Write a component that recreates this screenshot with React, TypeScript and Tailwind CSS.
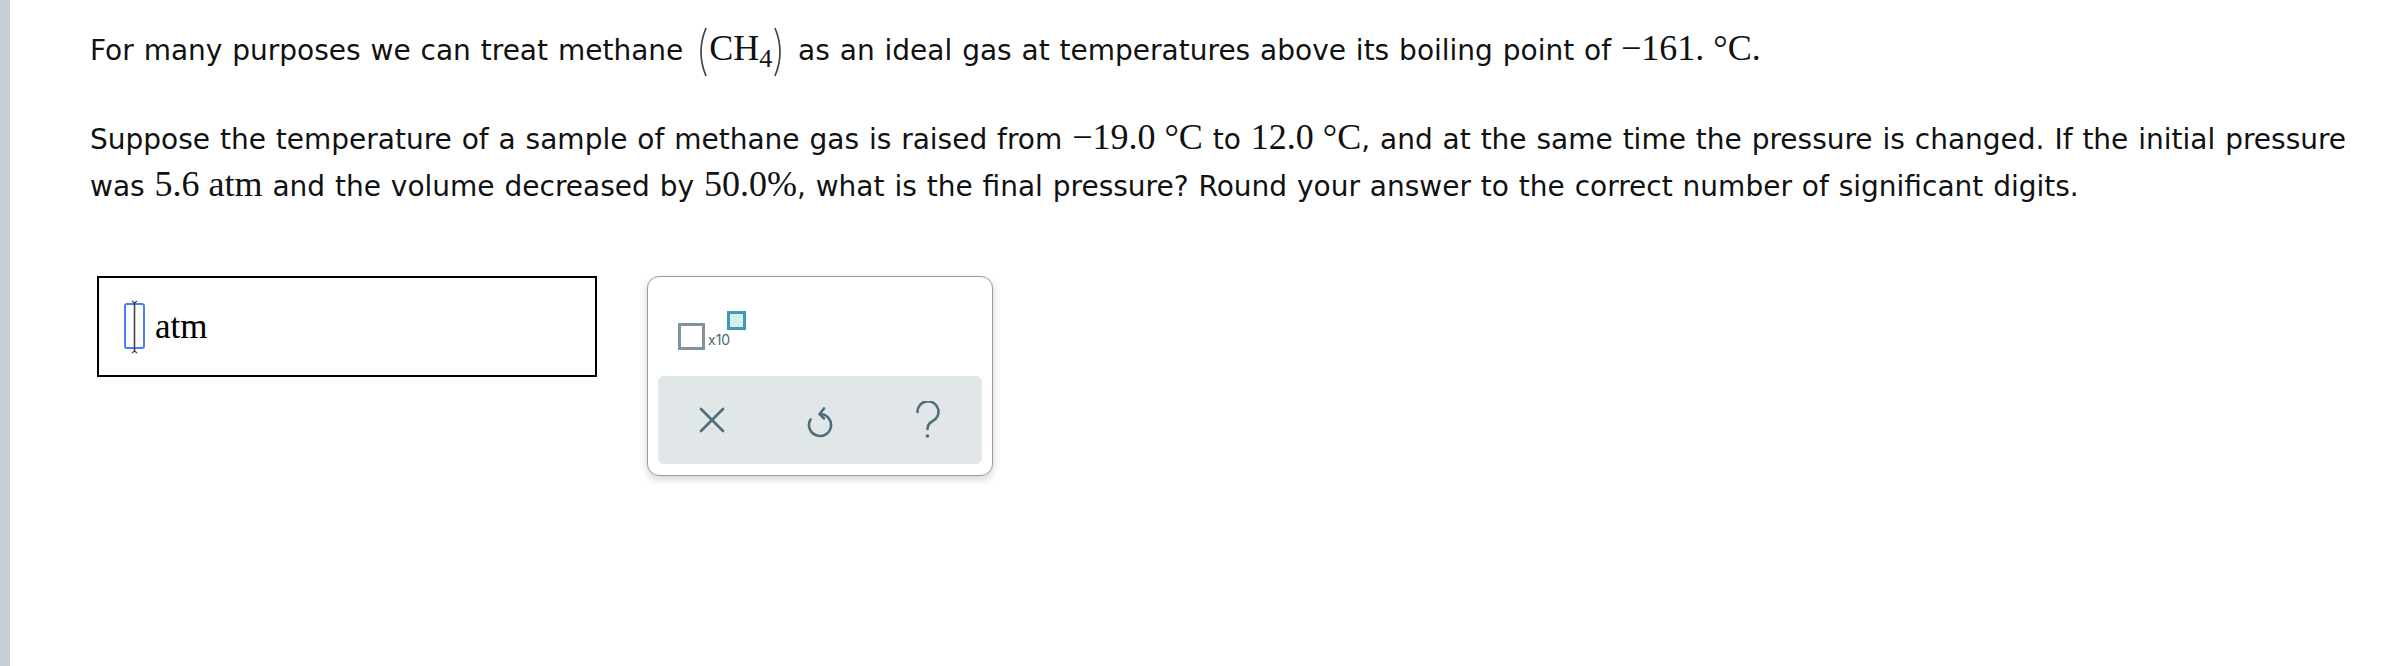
import React from "react";

const sans = { fontFamily: '"DejaVu Sans", Verdana, sans-serif' };

function M({ children }: { children: React.ReactNode }) {
  return (
    <span className="text-[36px] leading-none [font-family:'Liberation_Serif',serif] [word-spacing:0px]">{children}</span>
  );
}

function Paren({ right }: { right?: boolean }) {
  return (
    <svg
      width="16"
      height="52"
      viewBox="0 0 16 52"
      className="inline-block align-middle my-[-14px]"
    >
      <path
        d={right ? "M3 2 Q13 26 3 50" : "M13 2 Q3 26 13 50"}
        fill="none"
        stroke="#444"
        strokeWidth="1.7"
      />
    </svg>
  );
}

export default function App() {
  return (
    <div className="flex min-h-[666px] w-[2408px] bg-white text-[#111]">
      <div className="w-[10px] shrink-0 bg-[#c5cfd5]" />
      <div className="pl-[80px] pt-[27px] flex-1">
        <div className="text-[28px] leading-[47px] whitespace-nowrap [word-spacing:1px]" style={sans}>
          For many purposes we can treat methane{" "}
          <Paren />
          <M>
            CH<sub className="text-[26px] relative top-[7px] align-baseline">4</sub>
          </M>
          <Paren right /> as an ideal gas at temperatures above its boiling point of{" "}
          <M>−161. °C.</M>
        </div>
        <div className="mt-[42px] text-[28px] leading-[47px] whitespace-nowrap [word-spacing:1px]" style={sans}>
          <div>
            Suppose the temperature of a sample of methane gas is raised from <M>−19.0 °C</M> to{" "}
            <M>12.0 °C</M>, and at the same time the pressure is changed. If the initial pressure
          </div>
          <div>
            was <M>5.6 atm</M> and the volume decreased by <M>50.0%</M>, what is the final pressure?
            Round your answer to the correct number of significant digits.
          </div>
        </div>

        <div className="mt-[66px] ml-[7px] flex items-start gap-[50px]">
          <div className="w-[500px] h-[101px] border-2 border-black flex items-center pl-[23px]">
            <svg width="24" height="54" viewBox="0 0 24 54">
              <rect x="3" y="4" width="19" height="44" rx="2" fill="none" stroke="#4d7cf8" strokeWidth="2" />
              <path d="M12.5 2 V52" stroke="#444" strokeWidth="1.6" />
              <path d="M10 1 L12.5 3 L15 1 M10 53 L12.5 51 L15 53" stroke="#444" strokeWidth="1.2" fill="none" />
            </svg>
            <span className="ml-[9px] text-[35px] leading-none [font-family:'Liberation_Serif',serif] text-black">
              atm
            </span>
          </div>

          <div className="w-[346px] h-[200px] rounded-[12px] border border-[#8a9ea8] bg-white shadow-[0_3px_8px_rgba(0,0,0,0.18)] flex flex-col px-[10px] pb-[11px]">
            <div className="flex-1 relative">
              <div className="absolute left-[20px] top-[46px] w-[27px] h-[27px] border-[3px] border-[#7f949e]" />
              <span className="absolute left-[50px] top-[56px] text-[14px] leading-none text-[#4c6873] [font-family:Inter,sans-serif]">
                x10
              </span>
              <div className="absolute left-[69px] top-[34px] w-[19px] h-[19px] border-[3px] border-[#3d9ab0] bg-[#d5eef3]" />
            </div>
            <div className="h-[88px] rounded-[6px] bg-[#e1e6e9] flex items-center">
              <div className="flex-1 flex justify-center">
                <svg width="26" height="26" viewBox="0 0 26 26">
                  <path d="M2 2 L24 24 M24 2 L2 24" stroke="#4d6f7b" strokeWidth="2.6" strokeLinecap="round" />
                </svg>
              </div>
              <div className="flex-1 flex justify-center">
                <svg width="28" height="36" viewBox="0 0 28 36">
                  <path d="M14 12 A11 11 0 1 1 4.5 17.5" fill="none" stroke="#4d6f7b" strokeWidth="2.6" strokeLinecap="round" />
                  <path d="M18 6.5 L13.5 12 L18 16.5" fill="none" stroke="#4d6f7b" strokeWidth="2.6" strokeLinecap="round" strokeLinejoin="round" />
                </svg>
              </div>
              <div className="flex-1 flex justify-center">
                <svg width="26" height="38" viewBox="0 0 26 38">
                  <path d="M2.5 11 A10.5 10.5 0 1 1 17 20.5 C13.5 22.5 12.5 24.5 12.5 28" fill="none" stroke="#4d6f7b" strokeWidth="2.6" strokeLinecap="round" />
                  <circle cx="12.5" cy="35" r="1.8" fill="#4d6f7b" />
                </svg>
              </div>
            </div>
          </div>
        </div>
      </div>
    </div>
  );
}
